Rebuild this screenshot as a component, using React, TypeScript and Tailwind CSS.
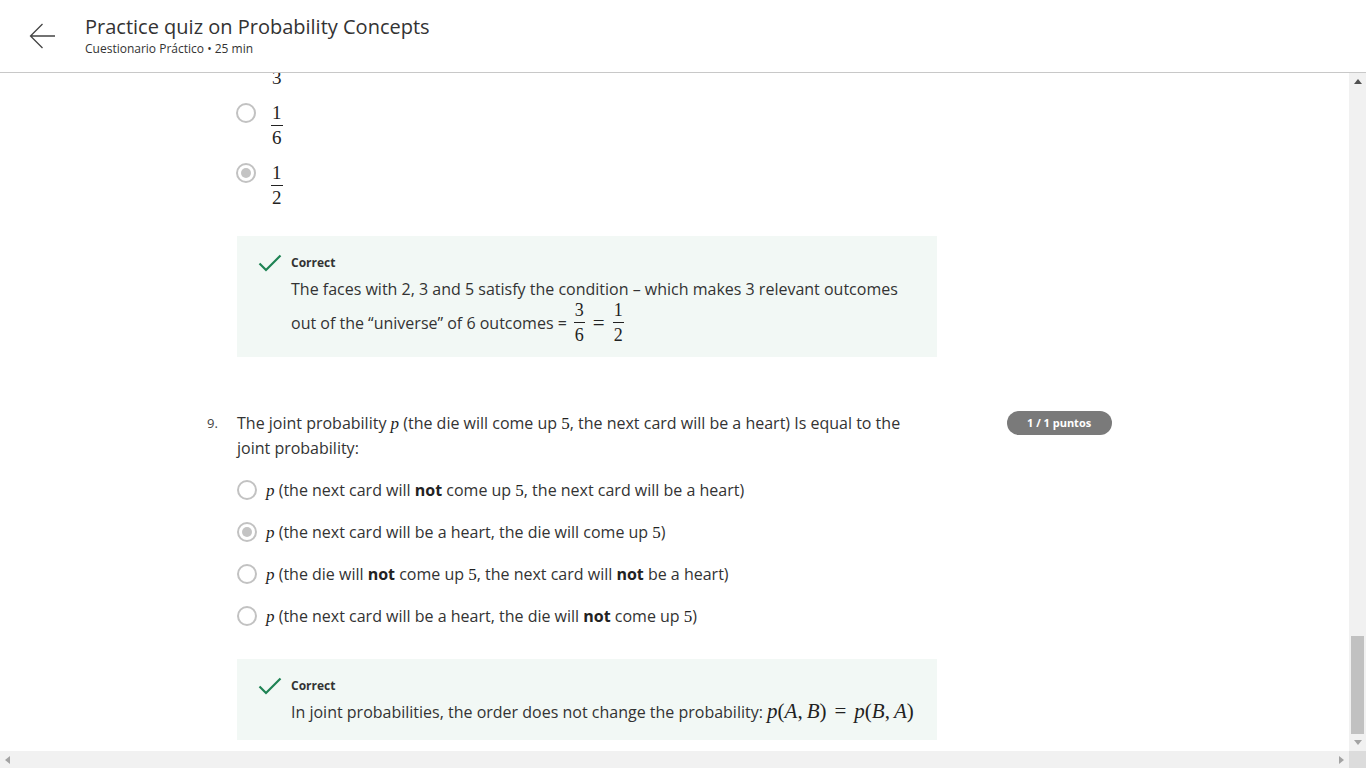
import React from "react";

const sans = { fontFamily: '"Open Sans", "Liberation Sans", sans-serif' };
const serif = { fontFamily: '"Liberation Serif", "DejaVu Serif", serif' };

function Radio({ checked }: { checked?: boolean }) {
  return (
    <div className="w-[20px] h-[20px] rounded-full border-2 border-[#c2c2c2] flex items-center justify-center shrink-0 bg-white">
      {checked && <div className="w-[10px] h-[10px] rounded-full bg-[#c4c4c4]" />}
    </div>
  );
}

function Frac({ n, d, size = "text-[19px]", h = "leading-[24px] h-[24px]" }: { n: string; d: string; size?: string; h?: string }) {
  return (
    <div className={`inline-flex flex-col items-center text-[#222] ${size}`} style={serif}>
      <span className={`${h} px-[1px]`}>{n}</span>
      <span className="h-[1px] w-full bg-[#222]" />
      <span className={`${h} px-[1px]`}>{d}</span>
    </div>
  );
}

function FracOption({ n, d, checked }: { n: string; d: string; checked?: boolean }) {
  return (
    <div className="flex items-start">
      <div className="h-[24px] flex items-center w-[20px]">
        <Radio checked={checked} />
      </div>
      <div className="ml-[15px]">
        <Frac n={n} d={d} />
      </div>
    </div>
  );
}

function Check() {
  return (
    <svg width="24" height="20" viewBox="0 0 24 20" className="shrink-0">
      <path d="M1.5 10.5 L8 17 L22.5 2.5" fill="none" stroke="#1f8354" strokeWidth="2.2" />
    </svg>
  );
}

function M({ children, italic }: { children: React.ReactNode; italic?: boolean }) {
  return (
    <span className={`text-[17px] leading-[20px] text-[#222] ${italic ? "italic" : ""}`} style={serif}>
      {children}
    </span>
  );
}

function TextOption({ checked, children }: { checked?: boolean; children: React.ReactNode }) {
  return (
    <div className="flex items-center h-[24px]">
      <Radio checked={checked} />
      <div className="ml-[9px] text-[16px] leading-[24px] text-[#333] whitespace-nowrap">{children}</div>
    </div>
  );
}

export default function App() {
  return (
    <div className="w-screen h-screen overflow-hidden flex flex-col bg-white text-[#333]" style={sans}>
      {/* Header */}
      <header className="h-[73px] shrink-0 border-b border-[#c8c8c8] flex items-start">
        <div className="ml-[29px] mt-[23px] w-[27px] h-[26px]">
          <svg width="27" height="26" viewBox="0 0 27 26">
            <path d="M1.5 13 H26 M13.5 1 L1.5 13 L13.5 25" fill="none" stroke="#444" strokeWidth="1.3" />
          </svg>
        </div>
        <div className="ml-[29px] mt-[13px] flex flex-col">
          <div className="text-[20px] leading-[28px] text-[#333]">Practice quiz on Probability Concepts</div>
          <div className="text-[12px] leading-[16px] text-[#333]">Cuestionario Práctico • 25 min</div>
        </div>
      </header>

      <div className="flex-1 min-h-0 flex">
        <div className="flex-1 min-w-0 flex flex-col">
          {/* Content */}
          <div className="flex-1 min-h-0 overflow-hidden">
            <div className="pl-[236px]">
              <div className="flex flex-col gap-[11px] -mt-[32px]">
                <FracOption n="1" d="3" />
                <FracOption n="1" d="6" />
                <FracOption n="1" d="2" checked />
              </div>
            </div>

            <div className="pl-[237px] mt-[26px]">
              <div className="w-[700px] h-[121px] bg-[#f2f8f5] pl-[21px] pt-[18px] flex items-start">
                <div className="mt-[-1px]"><Check /></div>
                <div className="ml-[9px] flex flex-col">
                  <div className="text-[12px] leading-[18px] font-bold text-[#333]">Correct</div>
                  <div className="mt-[5px] text-[16px] leading-[24px] text-[#333] whitespace-nowrap">
                    The faces with 2, 3 and 5 satisfy the condition – which makes 3 relevant outcomes
                  </div>
                  <div className="-mt-[3px] flex items-center text-[16px] text-[#333] whitespace-nowrap">
                    <span>out of the “universe” of 6 outcomes =</span>
                    <span className="ml-[7px]"><Frac n="3" d="6" size="text-[18px]" /></span>
                    <span className="mx-[8px] text-[21px] leading-[24px] text-[#222]" style={serif}>=</span>
                    <Frac n="1" d="2" size="text-[18px]" />
                  </div>
                </div>
              </div>
            </div>

            {/* Question 9 */}
            <div className="pl-[207px] mt-[54px] flex items-start">
              <div className="w-[30px] text-[13px] leading-[24px] text-[#444]">9.</div>
              <div className="w-[700px]">
                <div className="text-[16px] leading-[25px] text-[#333]">
                  The joint probability <M italic>p</M> (the die will come up <M>5</M>, the next card will be a heart) Is equal to the joint probability:
                </div>
                <div className="mt-[17px] flex flex-col gap-[18px]">
                  <TextOption>
                    <M italic>p</M> (the next card will <b className="text-[#222]">not</b> come up <M>5</M>, the next card will be a heart)
                  </TextOption>
                  <TextOption checked>
                    <M italic>p</M> (the next card will be a heart, the die will come up <M>5</M>)
                  </TextOption>
                  <TextOption>
                    <M italic>p</M> (the die will <b className="text-[#222]">not</b> come up <M>5</M>, the next card will <b className="text-[#222]">not</b> be a heart)
                  </TextOption>
                  <TextOption>
                    <M italic>p</M> (the next card will be a heart, the die will <b className="text-[#222]">not</b> come up <M>5</M>)
                  </TextOption>
                </div>
                <div className="mt-[31px] w-[700px] h-[81px] bg-[#f2f8f5] pl-[21px] pt-[18px] flex items-start">
                  <div className="mt-[-1px]"><Check /></div>
                  <div className="ml-[9px] flex flex-col">
                    <div className="text-[12px] leading-[18px] font-bold text-[#333]">Correct</div>
                    <div className="mt-[5px] text-[16px] leading-[24px] text-[#333] whitespace-nowrap">
                      In joint probabilities, the order does not change the probability:{" "}
                      <span className="text-[21px] leading-[20px] text-[#222]" style={serif}>
                        <i>p</i>(<i>A</i>,<span className="ml-[4px]" /><i>B</i>)<span className="mx-[8px]">=</span><i>p</i>(<i>B</i>,<span className="ml-[4px]" /><i>A</i>)
                      </span>
                    </div>
                  </div>
                </div>
              </div>
              <div className="ml-[70px] h-[24px] pl-[20px] pr-[21px] rounded-full bg-[#7a7a7a] text-white text-[11px] font-bold leading-[24px] whitespace-nowrap">
                1 / 1 puntos
              </div>
            </div>
          </div>

          {/* Horizontal scrollbar */}
          <div className="h-[17px] shrink-0 bg-[#f1f1f1] flex items-center justify-between px-[5px]">
            <svg width="6" height="8" viewBox="0 0 6 8"><path d="M5 0 L0 4 L5 8 Z" fill="#a3a3a3" /></svg>
            <svg width="6" height="8" viewBox="0 0 6 8"><path d="M1 0 L6 4 L1 8 Z" fill="#a3a3a3" /></svg>
          </div>
        </div>

        {/* Vertical scrollbar */}
        <div className="w-[17px] shrink-0 flex flex-col">
          <div className="flex-1 bg-[#f1f1f1] flex flex-col items-center">
            <div className="h-[17px] flex items-center justify-center">
              <svg width="8" height="5" viewBox="0 0 8 5"><path d="M0 5 L4 0 L8 5 Z" fill="#505050" /></svg>
            </div>
            <div className="flex-1" />
            <div className="w-[13px] h-[98px] bg-[#c1c1c1]" />
            <div className="h-[17px] flex items-center justify-center">
              <svg width="8" height="5" viewBox="0 0 8 5"><path d="M0 0 L8 0 L4 5 Z" fill="#a3a3a3" /></svg>
            </div>
          </div>
          <div className="h-[17px] bg-[#dcdcdc]" />
        </div>
      </div>
    </div>
  );
}
